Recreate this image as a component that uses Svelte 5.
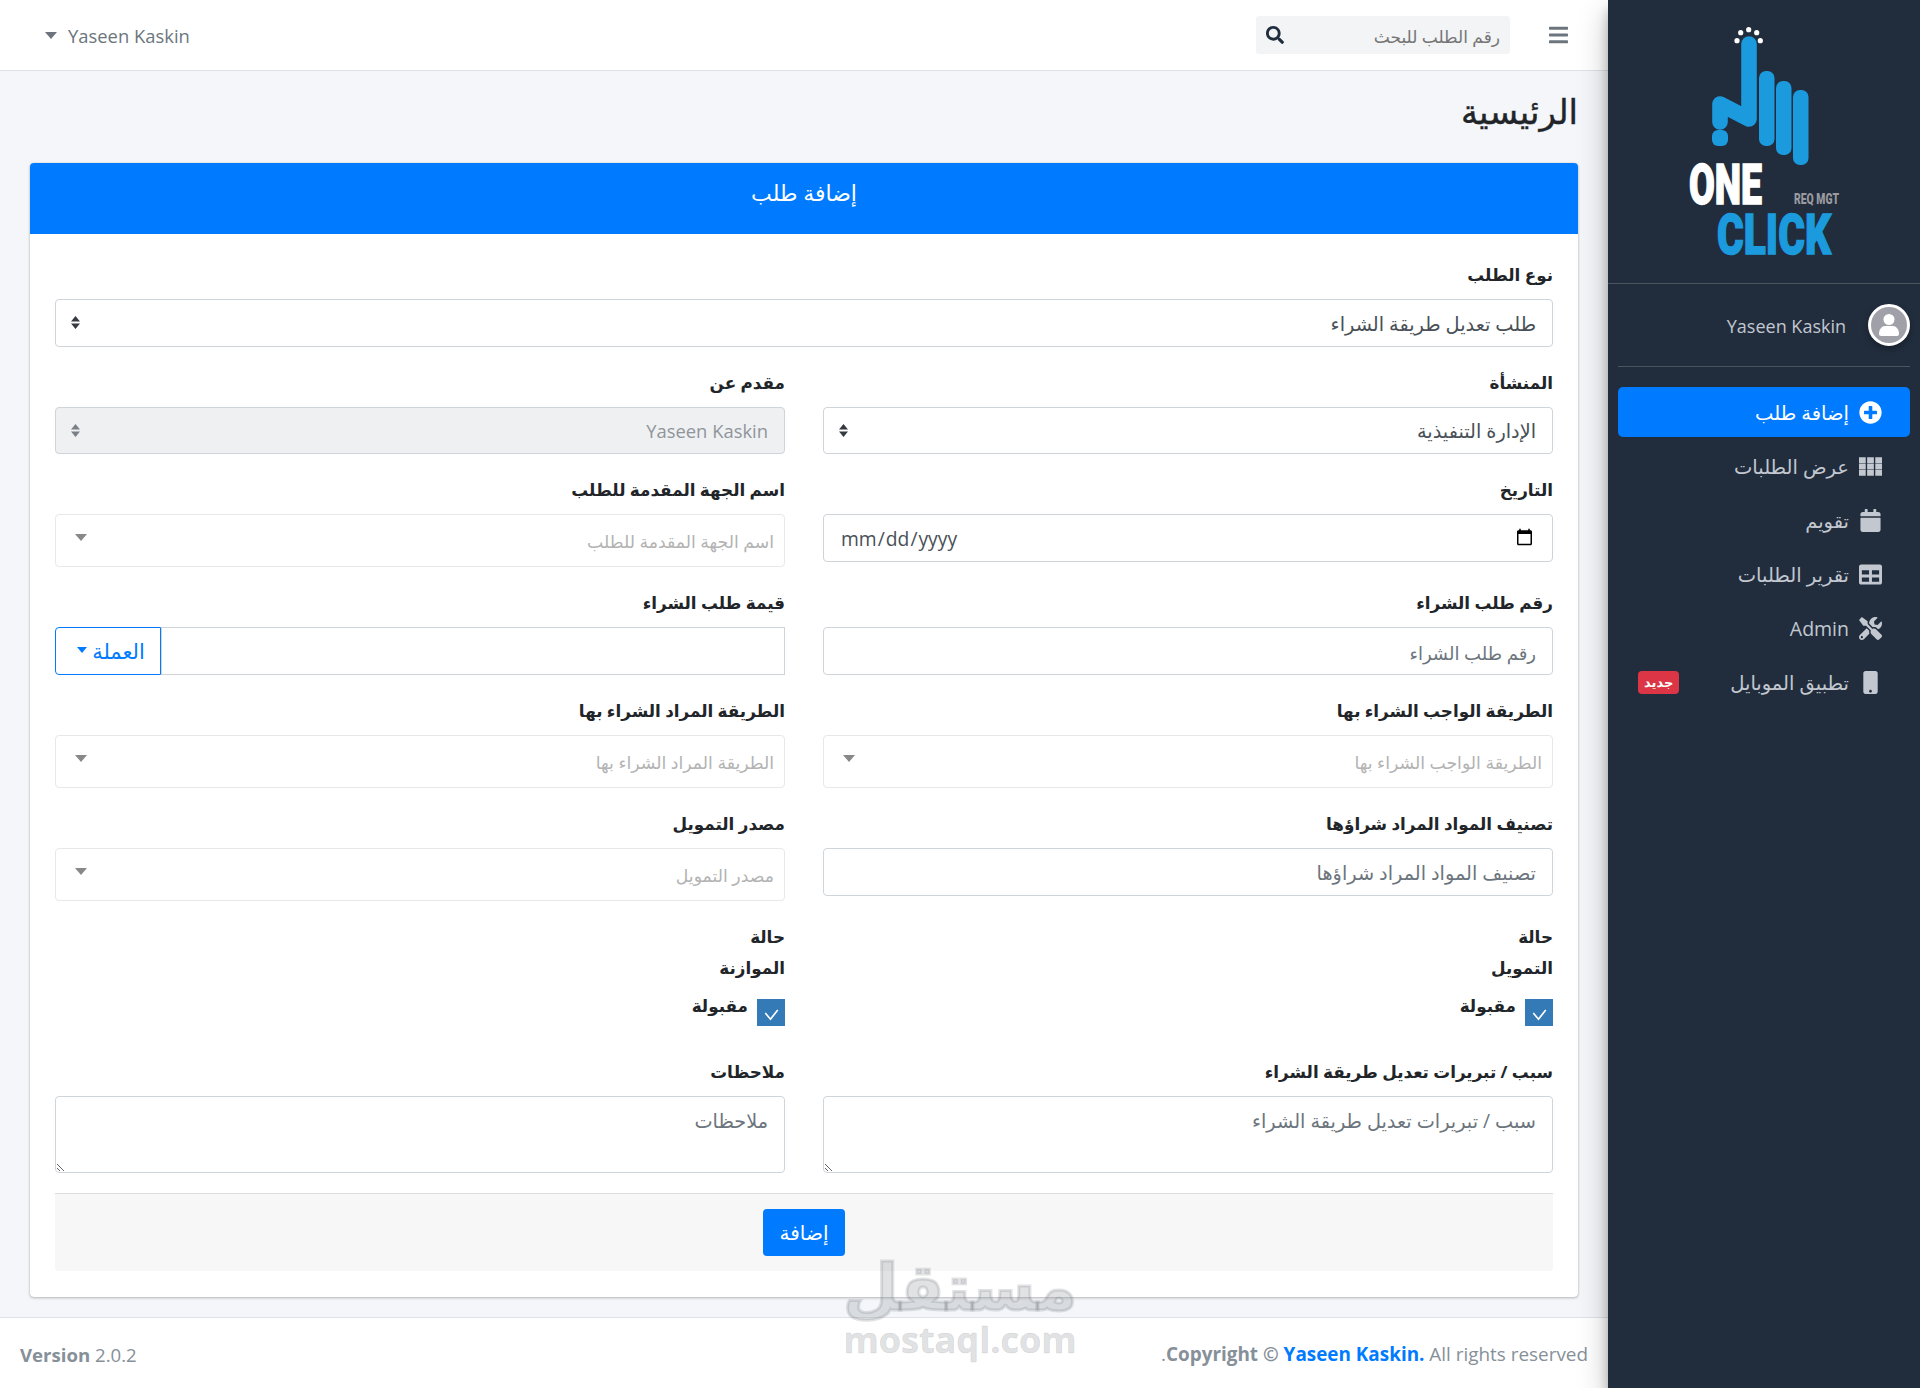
<script lang="ts">
	const icons = {
		plus: [512, 'M256 8C119 8 8 119 8 256s111 248 248 248 248-111 248-248S393 8 256 8zm144 276c0 6.6-5.4 12-12 12h-92v92c0 6.6-5.4 12-12 12h-56c-6.6 0-12-5.4-12-12v-92h-92c-6.6 0-12-5.4-12-12v-56c0-6.6 5.4-12 12-12h92v-92c0-6.6 5.4-12 12-12h56c6.6 0 12 5.4 12 12v92h92c6.6 0 12 5.4 12 12v56z'],
		grid: [512, 'M0 48h150v130H0zM181 48h150v130H181zM362 48h150v130H362zM0 191h150v130H0zM181 191h150v130H181zM362 191h150v130H362zM0 334h150v130H0zM181 334h150v130H181zM362 334h150v130H362z'],
		calendar: [448, 'M12 192h424c6.6 0 12 5.4 12 12v260c0 26.5-21.5 48-48 48H48c-26.5 0-48-21.5-48-48V204c0-6.6 5.4-12 12-12zm436-44v-36c0-26.5-21.5-48-48-48h-48V12c0-6.6-5.4-12-12-12h-40c-6.6 0-12 5.4-12 12v52H160V12c0-6.6-5.4-12-12-12h-40c-6.6 0-12 5.4-12 12v52H48C21.5 64 0 85.5 0 112v36c0 6.6 5.4 12 12 12h424c6.6 0 12-5.4 12-12z'],
		table: [512, 'M464 32H48C21.49 32 0 53.49 0 80v352c0 26.51 21.49 48 48 48h416c26.51 0 48-21.49 48-48V80c0-26.51-21.49-48-48-48zM224 416H64v-96h160v96zm0-160H64v-96h160v96zm224 160H288v-96h160v96zm0-160H288v-96h160v96z'],
		tools: [512, 'M501.1 395.7L384 278.6c-23.1-23.1-57.6-27.6-85.4-13.9L192 158.1V96L64 0 0 64l96 128h62.1l106.6 106.6c-13.6 27.8-9.2 62.3 13.9 85.4l117.1 117.1c14.6 14.6 38.2 14.6 52.7 0l52.7-52.7c14.5-14.6 14.5-38.2 0-52.7zM331.7 225c28.3 0 54.9 11 74.9 31l19.4 19.4c15.8-6.9 30.8-16.5 43.8-29.5 37.1-37.1 49.7-89.3 37.9-136.7-2.2-9-13.5-12.1-20.1-5.5l-74.4 74.4-67.9-11.3L334 98.9l74.4-74.4c6.6-6.6 3.4-17.9-5.7-20.2-47.4-11.7-99.6.9-136.6 37.9-28.5 28.5-41.9 66.1-41.2 103.6l82.1 82.1c8.1-1.9 16.5-2.9 24.7-2.9zm-103.9 82l-56.7-56.7L18.7 402.8c-25 25-25 65.5 0 90.5s65.5 25 90.5 0l123.6-123.6c-7.6-19.9-9.9-41.6-5-62.7zM64 472c-13.2 0-24-10.8-24-24 0-13.3 10.7-24 24-24s24 10.7 24 24c0 13.2-10.7 24-24 24z'],
		mobile: [320, 'M272 0H48C21.5 0 0 21.5 0 48v416c0 26.5 21.5 48 48 48h224c26.5 0 48-21.5 48-48V48c0-26.5-21.5-48-48-48zM160 480c-17.7 0-32-14.3-32-32s14.3-32 32-32 32 14.3 32 32-14.3 32-32 32z']
	};

	const nav = [
		{ label: 'إضافة طلب', icon: 'plus', active: true },
		{ label: 'عرض الطلبات', icon: 'grid' },
		{ label: 'تقويم', icon: 'calendar' },
		{ label: 'تقرير الطلبات', icon: 'table' },
		{ label: 'Admin', icon: 'tools' },
		{ label: 'تطبيق الموبايل', icon: 'mobile', badge: 'جديد' }
	];
</script>

{#snippet arrows()}
	<svg class="arrows" viewBox="0 0 10 20" preserveAspectRatio="none" aria-hidden="true">
		<path d="M5 0 10 8.5H0zM5 20 0 11.5h10z" fill="currentColor" />
	</svg>
{/snippet}

{#snippet select2(text)}
	<div class="select2">
		<span>{text}</span>
		<i class="caret"></i>
	</div>
{/snippet}

<div class="page" dir="rtl">
	<aside class="sidebar">
		<div class="brand">
			<svg width="312" height="283" viewBox="0 0 312 283">
				<g fill="#1b9ade">
					<rect x="151" y="71" width="15.5" height="75" rx="7" />
					<rect x="168" y="81" width="15.5" height="74" rx="7" />
					<rect x="185" y="90" width="15.5" height="75" rx="7" />
					<rect x="104" y="130" width="16" height="16" rx="6" />
				</g>
				<path d="M141 44V119L112 104V122" fill="none" stroke="#1b9ade" stroke-width="15.6" stroke-linecap="round" stroke-linejoin="round" />
				<g fill="#fff">
					<circle cx="129" cy="40.7" r="2.6" />
					<circle cx="132.7" cy="32.7" r="2.6" />
					<circle cx="140.7" cy="29.7" r="2.6" />
					<circle cx="148.7" cy="32.7" r="2.6" />
					<circle cx="152.3" cy="40.7" r="2.6" />
				</g>
				<text class="logo" x="81" y="204" textLength="73" lengthAdjust="spacingAndGlyphs" fill="#fff" stroke="#fff">ONE</text>
				<text class="logo" x="109" y="254" textLength="114" lengthAdjust="spacingAndGlyphs" fill="#1b9ade" stroke="#1b9ade">CLICK</text>
				<text class="logo small" x="186" y="204" textLength="45" lengthAdjust="spacingAndGlyphs" fill="#9a9aa0">REQ MGT</text>
			</svg>
		</div>
		<div class="user">
			<span class="avatar">
				<svg viewBox="0 0 36 36" aria-hidden="true">
					<circle cx="18" cy="12.5" r="5.5" fill="#fff" />
					<path d="M8 27c0-5 3-8 6-8h8c3 0 6 3 6 8 0 1-1 2-2 2H10c-1 0-2-1-2-2z" fill="#fff" />
				</svg>
			</span>
			<span class="user-name">Yaseen Kaskin</span>
		</div>
		<nav>
			{#each nav as item}
				<a href="#top" class="nav-link" class:active={item.active}>
					<svg class="nav-icon" viewBox="0 0 {icons[item.icon][0]} 512" aria-hidden="true">
						<path d={icons[item.icon][1]} fill="currentColor" />
					</svg>
					<span>{item.label}</span>
					{#if item.badge}<em class="badge">{item.badge}</em>{/if}
				</a>
			{/each}
		</nav>
	</aside>

	<div class="main">
		<header class="navbar">
			<svg class="bars" viewBox="0 0 448 512" aria-hidden="true">
				<path d="M16 132h416c8.837 0 16-7.163 16-16V76c0-8.837-7.163-16-16-16H16C7.163 60 0 67.163 0 76v40c0 8.837 7.163 16 16 16zm0 160h416c8.837 0 16-7.163 16-16v-40c0-8.837-7.163-16-16-16H16c-8.837 0-16 7.163-16 16v40c0 8.837 7.163 16 16 16zm0 160h416c8.837 0 16-7.163 16-16v-40c0-8.837-7.163-16-16-16H16c-8.837 0-16 7.163-16 16v40c0 8.837 7.163 16 16 16z" fill="currentColor" />
			</svg>
			<div class="search">
				<input placeholder="رقم الطلب للبحث" />
				<svg viewBox="0 0 512 512" aria-hidden="true">
					<path d="M505 442.7L405.3 343c-4.5-4.5-10.6-7-17-7H372c27.6-35.3 44-79.7 44-128C416 93.1 322.9 0 208 0S0 93.1 0 208s93.1 208 208 208c48.3 0 92.7-16.4 128-44v16.3c0 6.4 2.5 12.5 7 17l99.7 99.7c9.4 9.4 24.6 9.4 33.9 0l28.3-28.3c9.4-9.4 9.4-24.6.1-34zM208 336c-70.7 0-128-57.2-128-128 0-70.7 57.2-128 128-128 70.7 0 128 57.2 128 128 0 70.7-57.2 128-128 128z" fill="#1f2d3d" />
				</svg>
			</div>
			<div class="nav-user">
				<span>Yaseen Kaskin</span>
				<i class="caret"></i>
			</div>
		</header>

		<section class="content">
			<h1>الرئيسية</h1>
			<div class="card">
				<div class="card-head">إضافة طلب</div>
				<form class="card-body">
					<div class="group full">
						<label for="type">نوع الطلب</label>
						<div class="select-wrap">
							<select id="type"><option>طلب تعديل طريقة الشراء</option></select>
							{@render arrows()}
						</div>
					</div>

					<div class="group">
						<label for="org">المنشأة</label>
						<div class="select-wrap short">
							<select id="org"><option>الإدارة التنفيذية</option></select>
							{@render arrows()}
						</div>
					</div>
					<div class="group">
						<label for="by">مقدم عن</label>
						<div class="select-wrap short">
							<select id="by" disabled><option>Yaseen Kaskin</option></select>
							{@render arrows()}
						</div>
					</div>

					<div class="group">
						<label for="date">التاريخ</label>
						<input id="date" class="control date" type="date" dir="ltr" />
					</div>
					<div class="group">
						<span class="label">اسم الجهة المقدمة للطلب</span>
						{@render select2('اسم الجهة المقدمة للطلب')}
					</div>

					<div class="group">
						<label for="po">رقم طلب الشراء</label>
						<input id="po" class="control compact" placeholder="رقم طلب الشراء" />
					</div>
					<div class="group">
						<label for="amount">قيمة طلب الشراء</label>
						<div class="input-group">
							<input id="amount" class="control" />
							<button type="button" class="currency">العملة <i class="caret"></i></button>
						</div>
					</div>

					<div class="group">
						<span class="label">الطريقة الواجب الشراء بها</span>
						{@render select2('الطريقة الواجب الشراء بها')}
					</div>
					<div class="group">
						<span class="label">الطريقة المراد الشراء بها</span>
						{@render select2('الطريقة المراد الشراء بها')}
					</div>

					<div class="group">
						<label for="cat">تصنيف المواد المراد شراؤها</label>
						<input id="cat" class="control" placeholder="تصنيف المواد المراد شراؤها" />
					</div>
					<div class="group">
						<span class="label">مصدر التمويل</span>
						{@render select2('مصدر التمويل')}
					</div>

					<div class="group">
						<span class="label two">حالة<br />التمويل</span>
						<div class="check">
							<span class="box"><svg viewBox="0 0 27 27"><path d="M8 13.5l5 6 7-9" fill="none" stroke="#fff" stroke-width="1.6" /></svg></span>
							<span>مقبولة</span>
						</div>
					</div>
					<div class="group">
						<span class="label two">حالة<br />الموازنة</span>
						<div class="check">
							<span class="box"><svg viewBox="0 0 27 27"><path d="M8 13.5l5 6 7-9" fill="none" stroke="#fff" stroke-width="1.6" /></svg></span>
							<span>مقبولة</span>
						</div>
					</div>

					<div class="group">
						<label for="why">سبب / تبريرات تعديل طريقة الشراء</label>
						<textarea id="why" class="control" placeholder="سبب / تبريرات تعديل طريقة الشراء"></textarea>
					</div>
					<div class="group">
						<label for="notes">ملاحظات</label>
						<textarea id="notes" class="control" placeholder="ملاحظات"></textarea>
					</div>

					<div class="form-foot full">
						<button type="button" class="submit">إضافة</button>
					</div>
				</form>
			</div>
		</section>

		<footer class="footer">
			<span class="copy"><b>Copyright © <a href="#top">Yaseen Kaskin.</a></b> All rights reserved.</span>
			<span class="version"><b>Version</b> 2.0.2</span>
		</footer>
	</div>

	<div class="watermark">
		<div class="wm-ar">مستقل</div>
		<div class="wm-en">mostaql.com</div>
	</div>
</div>

<style>
	:global(body) {
		margin: 0;
		background: #f4f6f9;
	}
	.page {
		--font: 'Open Sans', 'DejaVu Sans', sans-serif;
		position: relative;
		display: flex;
		width: 1920px;
		height: 1388px;
		overflow: hidden;
		font-family: var(--font);
		font-size: 18px;
		color: #212529;
	}
	input,
	select,
	textarea,
	button {
		font-family: var(--font);
		font-size: 19.3px;
	}

	/* sidebar */
	.sidebar {
		flex: 0 0 312px;
		position: relative;
		z-index: 2;
		background: #212d3d;
		box-shadow: 0 14px 28px rgba(0, 0, 0, 0.25), 0 10px 10px rgba(0, 0, 0, 0.22);
	}
	.brand {
		height: 283px;
		border-bottom: 1px solid #4b545c;
	}
	.brand svg {
		display: block;
		direction: ltr;
	}
	.logo {
		direction: ltr;
		font-family: Roboto, sans-serif;
		font-weight: 900;
		font-size: 56px;
		stroke-width: 1.5;
	}
	.logo.small {
		font-size: 14px;
		stroke-width: 0;
	}
	.user {
		display: flex;
		align-items: center;
		gap: 22px;
		height: 82px;
		margin: 0 10px;
		border-bottom: 1px solid #4b545c;
	}
	.avatar {
		display: flex;
		align-items: center;
		justify-content: center;
		width: 36px;
		height: 36px;
		background: #a0a0a8;
		border: 3px solid #fff;
		border-radius: 50%;
		box-shadow: 0 3px 6px rgba(0, 0, 0, 0.3);
	}
	.avatar svg {
		width: 36px;
		height: 36px;
	}
	.user-name {
		padding-top: 2px;
		color: #c2c7d0;
	}
	nav {
		display: flex;
		flex-direction: column;
		gap: 4px;
		margin: 20px 10px 0;
	}
	.nav-link {
		display: flex;
		align-items: center;
		height: 50px;
		padding: 0 28px 0 16px;
		border-radius: 5px;
		color: #c2c7d0;
		font-size: 19.5px;
		text-decoration: none;
	}
	.nav-link.active {
		background: #007bff;
		color: #fff;
	}
	.nav-icon {
		flex: 0 0 23px;
		height: 23px;
		margin-left: 10px;
	}
	.badge {
		margin-right: auto;
		margin-left: 4px;
		padding: 2px 6px;
		border-radius: 4px;
		background: #dc3545;
		color: #fff;
		font-size: 13px;
		font-style: normal;
		font-weight: 700;
		line-height: 19px;
	}

	/* top bar */
	.main {
		flex: 1;
		display: flex;
		flex-direction: column;
		min-width: 0;
	}
	.navbar {
		display: flex;
		align-items: center;
		height: 70px;
		padding: 0 40px 0 45px;
		background: #fff;
		border-bottom: 1px solid #dee2e6;
		color: #6c757d;
		font-size: 18.4px;
	}
	.bars {
		width: 19px;
		height: 22px;
		margin-left: 39px;
	}
	.search {
		display: flex;
		align-items: center;
		width: 254px;
		height: 38px;
		border-radius: 3px;
		background: #f2f4f6;
	}
	.search input {
		flex: 1;
		min-width: 0;
		height: 38px;
		padding: 2px 10px 0;
		box-sizing: border-box;
		border: 0;
		background: transparent;
		font-size: 17px;
		outline: none;
	}
	.search svg {
		width: 18px;
		height: 18px;
		margin-left: 10px;
	}
	.nav-user {
		display: flex;
		align-items: center;
		gap: 11px;
		margin-right: auto;
	}

	/* content */
	.content {
		flex: 1;
		padding: 0 30px;
	}
	h1 {
		display: flex;
		align-items: center;
		box-sizing: border-box;
		height: 92px;
		margin: 0;
		padding-bottom: 12px;
		font-size: 34px;
		font-weight: 500;
		-webkit-text-stroke: 0.4px #212529;
	}
	.card {
		height: 1134px;
		box-sizing: border-box;
		border-radius: 4px;
		background: #fff;
		box-shadow: 0 0 1px rgba(0, 0, 0, 0.25), 0 1px 3px rgba(0, 0, 0, 0.25);
		overflow: hidden;
	}
	.card-head {
		display: flex;
		align-items: center;
		justify-content: center;
		height: 71px;
		padding-bottom: 14px;
		box-sizing: border-box;
		background: #007bff;
		color: #fff;
		font-size: 22px;
	}
	.card-body {
		display: grid;
		grid-template-columns: 730px 730px;
		column-gap: 38px;
		row-gap: 22px;
		align-items: start;
		padding: 27px 25px 0;
	}
	.full {
		grid-column: 1 / -1;
	}
	label,
	.label {
		display: block;
		height: 28px;
		margin-bottom: 10px;
		font-size: 16.8px;
		font-weight: 700;
		line-height: 28px;
	}
	.label.two {
		height: 61px;
		margin-top: -1px;
		line-height: 30.5px;
	}
	.control,
	select {
		display: block;
		box-sizing: border-box;
		width: 100%;
		height: 48px;
		padding: 0 16px;
		background: #fff;
		border: 1px solid #ced4da;
		border-radius: 4px;
		color: #495057;
		outline: none;
	}
	.control::placeholder {
		color: #6c757d;
		opacity: 1;
	}
	.compact {
		padding-top: 4px;
		font-size: 18px;
	}
	textarea.control {
		height: 77px;
		padding-top: 10px;
		resize: both;
	}
	.select-wrap {
		position: relative;
	}
	select {
		appearance: none;
	}
	.short select {
		height: 47px;
	}
	select:disabled {
		background: #eff0f2;
		color: #8f959b;
		font-size: 18.4px;
		opacity: 1;
	}
	.arrows {
		position: absolute;
		top: 50%;
		left: 16px;
		width: 9px;
		height: 13px;
		margin-top: -7px;
		color: #343a40;
	}
	select:disabled + .arrows {
		color: #7b8087;
	}
	.caret {
		display: block;
		width: 0;
		height: 0;
		border-top: 7px solid currentColor;
		border-left: 6px solid transparent;
		border-right: 6px solid transparent;
	}
	.select2 {
		position: relative;
		display: flex;
		box-sizing: border-box;
		height: 53px;
		padding: 15px 10px 0;
		border: 1px solid #e6e8ea;
		border-radius: 4px;
		color: #b3b3b3;
		font-size: 17.3px;
		line-height: 24px;
	}
	.select2 .caret {
		margin-right: auto;
		margin-left: 9px;
		margin-top: 4px;
		color: #888;
	}
	.input-group {
		display: flex;
	}
	.input-group .control {
		flex: 1;
		min-width: 0;
		border-radius: 0;
	}
	.currency {
		display: flex;
		align-items: center;
		justify-content: center;
		gap: 5px;
		flex: 0 0 106px;
		height: 48px;
		padding-right: 0;
		background: #fff;
		border: 1px solid #007bff;
		border-radius: 4px 0 0 4px;
		color: #007bff;
		font-size: 21px;
	}
	.currency .caret {
		border-top-width: 6px;
		border-left-width: 5px;
		border-right-width: 5px;
		margin-top: -3px;
	}
	.check {
		display: flex;
		align-items: flex-start;
		gap: 9px;
		height: 43px;
		font-size: 16.8px;
		font-weight: 700;
		line-height: 26px;
	}
	.box {
		flex: 0 0 28px;
		height: 27px;
		margin-top: 6px;
		background: #337ab7;
	}
	.box svg {
		display: block;
	}
	.form-foot {
		display: flex;
		justify-content: center;
		align-items: flex-start;
		box-sizing: border-box;
		height: 78px;
		margin-top: -2px;
		padding-top: 15px;
		background: #f7f7f7;
		border-top: 1px solid #dddddd;
		border-radius: 0 0 3px 3px;
	}
	.submit {
		width: 82px;
		height: 47px;
		background: #007bff;
		border: 0;
		border-radius: 4px;
		color: #fff;
		font-size: 20px;
	}

	/* footer */
	.footer {
		display: flex;
		align-items: center;
		justify-content: space-between;
		box-sizing: border-box;
		height: 71px;
		padding: 2px 20px 0;
		background: #fff;
		border-top: 1px solid #dee2e6;
		color: #869099;
		font-size: 18.9px;
	}
	.version {
		font-size: 18.6px;
	}
	.footer a {
		color: #007bff;
		text-decoration: none;
	}
	.footer b {
		font-weight: 700;
	}

	/* site watermark over the screenshot */
	.watermark {
		position: absolute;
		left: 835px;
		top: 1244px;
		width: 250px;
		z-index: 3;
		text-align: center;
		color: rgba(120, 125, 130, 0.22);
		font-weight: 700;
		pointer-events: none;
	}
	.wm-ar {
		margin-bottom: -8px;
		font-size: 64px;
		line-height: 84px;
		-webkit-text-stroke: 3px rgba(120, 125, 130, 0.22);
	}
	.wm-en {
		font-size: 36px;
		line-height: 40px;
		-webkit-text-stroke: 0.6px rgba(120, 125, 130, 0.22);
	}
</style>
